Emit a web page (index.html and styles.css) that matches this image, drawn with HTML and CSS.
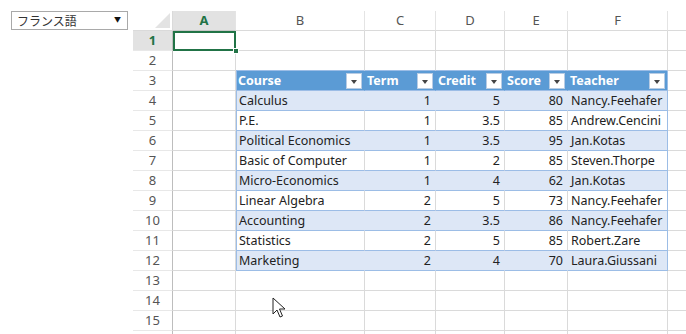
FILE: index.html
```html
<!DOCTYPE html>
<html lang="ja">
<head>
    <meta charset="UTF-8">
    <title>Spreadsheet</title>
    <link rel="stylesheet" href="styles.css">
</head>
<body>
    <div class="page">
        <div class="lang-select">
            <span>フランス語</span>
            <span class="arrow">▼</span>
        </div>

        <div class="sheet">
            <!-- column headers -->
            <div class="cell corner"><span class="tri"></span></div>
            <div class="cell col-head active">A</div>
            <div class="cell col-head">B</div>
            <div class="cell col-head">C</div>
            <div class="cell col-head">D</div>
            <div class="cell col-head">E</div>
            <div class="cell col-head">F</div>
            <div class="cell col-head last"></div>

            <!-- row 1 -->
            <div class="cell row-head active">1</div>
            <div class="cell selected"><span class="handle"></span></div>
            <div class="cell"></div><div class="cell"></div><div class="cell"></div><div class="cell"></div><div class="cell"></div><div class="cell last"></div>

            <!-- row 2 -->
            <div class="cell row-head">2</div>
            <div class="cell"></div>
            <div class="cell t-top"></div><div class="cell t-top"></div><div class="cell t-top"></div><div class="cell t-top"></div><div class="cell t-top"></div><div class="cell last"></div>
        </div>
    </div>

    <script>
        const data = [
            ['Calculus', 1, 5, 80, 'Nancy.Feehafer'],
            ['P.E.', 1, 3.5, 85, 'Andrew.Cencini'],
            ['Political Economics', 1, 3.5, 95, 'Jan.Kotas'],
            ['Basic of Computer', 1, 2, 85, 'Steven.Thorpe'],
            ['Micro-Economics', 1, 4, 62, 'Jan.Kotas'],
            ['Linear Algebra', 2, 5, 73, 'Nancy.Feehafer'],
            ['Accounting', 2, 3.5, 86, 'Nancy.Feehafer'],
            ['Statistics', 2, 5, 85, 'Robert.Zare'],
            ['Marketing', 2, 4, 70, 'Laura.Giussani']
        ];
        const headers = ['Course', 'Term', 'Credit', 'Score', 'Teacher'];
        const sheet = document.querySelector('.sheet');

        function add(cls, text) {
            const div = document.createElement('div');
            div.className = 'cell ' + cls;
            if (text !== undefined) div.textContent = text;
            sheet.appendChild(div);
            return div;
        }

        // row 3: table header
        add('row-head', 3);
        add('');
        headers.forEach(function(h, i) {
            const c = add('t-head' + (i === 0 ? ' t-left' : '') + (i === 4 ? ' t-right' : ''));
            const label = document.createElement('span');
            label.textContent = h;
            const btn = document.createElement('span');
            btn.className = 'filter';
            c.appendChild(label);
            c.appendChild(btn);
        });
        add('last');

        // rows 4-12: data
        data.forEach(function(row, r) {
            add('row-head', r + 4);
            add('');
            const band = r % 2 === 0 ? ' band' : '';
            row.forEach(function(v, i) {
                let cls = 't-cell' + band;
                if (typeof v === 'number') cls += ' num';
                if (i === 0) cls += ' t-left';
                if (i === 4) cls += ' t-right';
                add(cls, v);
            });
            add('last');
        });

        // rows 13-15: empty, plus the start of the next row
        for (let n = 13; n <= 16; n++) {
            add('row-head', n <= 15 ? n : '');
            for (let i = 0; i < 6; i++) add('');
            add('last');
        }
    </script>

    <svg class="pointer" width="14" height="22" viewBox="0 0 14 22">
        <path d="M1 1 L1 17 L5 13 L8 20 L10.5 19 L7.5 12 L13 12 Z" fill="#fff" stroke="#222" stroke-width="1" stroke-linejoin="round"/>
    </svg>
</body>
</html>
```

FILE: styles.css
```css
* {
    margin: 0;
    padding: 0;
    box-sizing: border-box;
}

body {
    font-family: 'Noto Sans', 'Noto Sans CJK JP', sans-serif;
    background: #fff;
    color: #222;
    height: 334px;
    overflow: hidden;
}

.page {
    display: flex;
    align-items: flex-start;
    gap: 5px;
    padding: 11px 0 0 11px;
}

.lang-select {
    flex: none;
    width: 117px;
    height: 19px;
    border: 1px solid #a9a9a9;
    display: flex;
    align-items: center;
    justify-content: space-between;
    padding: 0 6px 0 5px;
    font-size: 12px;
    color: #333;
}

.lang-select .arrow {
    font-size: 7px;
    color: #111;
    margin-top: -3px;
}

.sheet {
    flex: none;
    display: grid;
    grid-template-columns: 40px 63px 129px 71px 69px 63px 100px 19px;
    grid-auto-rows: 20px;
    height: 323px;
    overflow: hidden;
    font-size: 12.5px;
}

.cell {
    border-right: 1px solid #dadada;
    border-bottom: 1px solid #dadada;
    padding: 0 3px;
    line-height: 19px;
    white-space: nowrap;
    overflow: hidden;
    position: relative;
}

.cell.last {
    border-right: none;
}

.corner {
    border-right: 1px solid #dadada;
}

.corner .tri {
    position: absolute;
    right: 2px;
    bottom: 2px;
    width: 0;
    height: 0;
    border-left: 15px solid transparent;
    border-bottom: 15px solid #e3e3e3;
}

.col-head {
    text-align: center;
    color: #555;
    font-size: 13px;
    border-right-color: #e4e4e4;
}

.col-head.active {
    background: #e2e2e2;
    color: #217346;
    font-weight: bold;
    border-bottom-color: #c8c8c8;
}

.row-head {
    text-align: center;
    color: #555;
    font-size: 13px;
    border-bottom-color: #e8e8e8;
    border-right-color: #bdbdbd;
}

.row-head.active {
    background: #e2e2e2;
    color: #217346;
    font-weight: bold;
}

.selected {
    overflow: visible;
    outline: 2px solid #217346;
    outline-offset: -2px;
    z-index: 2;
}

.selected .handle {
    position: absolute;
    right: -4px;
    bottom: -4px;
    width: 6px;
    height: 6px;
    background: #217346;
    border: 1px solid #fff;
}

.t-top {
    border-bottom-color: #9cbde6;
}

.t-head {
    background: #5b9bd5;
    color: #fff;
    font-weight: bold;
    border-right-color: #5b9bd5;
    border-bottom-color: #9cbde6;
    display: flex;
    align-items: center;
    justify-content: space-between;
    padding: 0 2px 0 2px;
}

.filter {
    width: 16px;
    height: 16px;
    background: #fff;
    border: 1px solid #b8cce4;
    position: relative;
    flex: none;
}

.filter::after {
    content: '';
    position: absolute;
    left: 4px;
    top: 6px;
    border-left: 3.5px solid transparent;
    border-right: 3.5px solid transparent;
    border-top: 4px solid #444;
}

.t-cell {
    color: #222;
    border-bottom-color: #9cbde6;
}

.t-cell.band {
    background: #dde7f6;
    border-right-color: #dde7f6;
}

.t-cell.num {
    text-align: right;
    padding-right: 4px;
}

.t-left {
    box-shadow: inset 1px 0 0 #9cbde6;
}

.t-right {
    border-right-color: #9cbde6 !important;
}

.pointer {
    position: absolute;
    left: 272px;
    top: 297px;
}
```
